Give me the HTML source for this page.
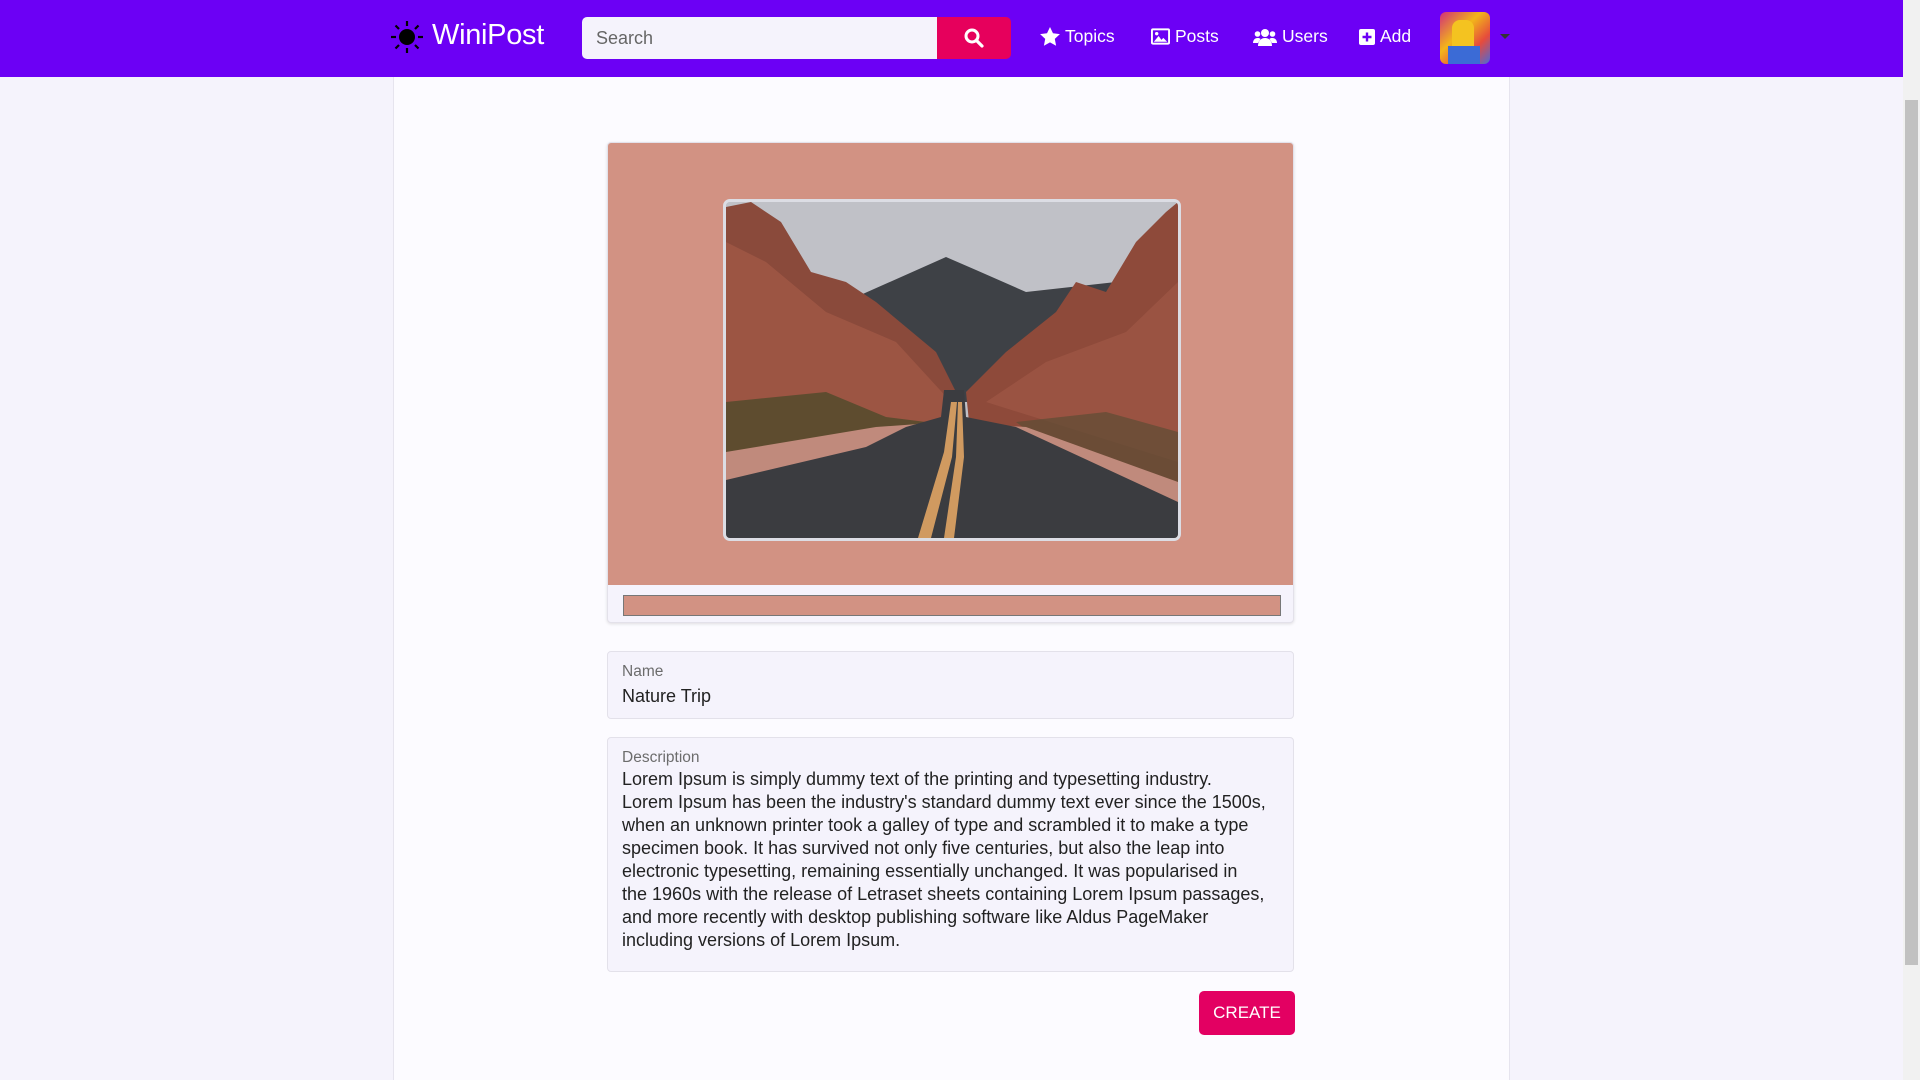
<!DOCTYPE html>
<html><head><meta charset="utf-8">
<style>
*{box-sizing:border-box;margin:0;padding:0}
body{width:1920px;height:1080px;overflow:hidden;background:#f5f3fc;font-family:"Liberation Sans",Arial,sans-serif;position:relative}
.nav{position:absolute;left:0;top:0;width:1903px;height:77px;background:#6c00f5}
.logo{position:absolute;left:432px;top:19px;color:#fff;font-size:29px;letter-spacing:-0.3px}
.search{position:absolute;left:582px;top:17px;width:355px;height:42px;background:#f5f3fc;border-radius:5px 0 0 5px;color:#666;font-size:18px;padding:11px 14px}
.sbtn{position:absolute;left:937px;top:17px;width:74px;height:42px;background:#e6005c;border-radius:0 5px 5px 0}
.link{position:absolute;top:26px;color:#fff;font-size:17.5px;display:flex;align-items:center;gap:5px}
.avatar{position:absolute;left:1440px;top:12px;width:50px;height:52px;border-radius:6px;background:linear-gradient(135deg,#d12f7a,#f2b51a 40%,#e64b3c 70%,#4a6ad8);overflow:hidden}
.caret{position:absolute;left:1500px;top:34px;width:0;height:0;border-left:5px solid transparent;border-right:5px solid transparent;border-top:5px solid #333}
.sb{position:absolute;left:1903px;top:0;width:17px;height:1080px;background:#f1f1f1}
.thumb{position:absolute;left:1905px;top:100px;width:13px;height:865px;background:#c1c1c1}
.cont{position:absolute;left:393px;top:77px;width:1117px;height:1003px;background:#fcfbff;border-left:1px solid #e6e4ee;border-right:1px solid #e6e4ee}
.card{position:absolute;left:607px;top:142px;width:687px;height:481px;background:#f5f3fc;border:1px solid #e3e1ea;border-radius:4px;box-shadow:0 1px 3px rgba(0,0,0,.12);overflow:hidden}
.pink{position:absolute;left:0;top:0;width:100%;height:442px;background:#d29283}
.img{position:absolute;left:115px;top:56px;width:458px;height:342px;border:3px solid #dcdde4;border-radius:7px;overflow:hidden;background:#bfc0c6}
.bar{position:absolute;left:15px;top:452px;width:658px;height:21px;background:#d29283;border:1px solid #777}
.field{position:absolute;left:607px;width:687px;background:#f5f3fc;border:1px solid #e3e1ea;border-radius:4px}
.lbl{position:absolute;left:14px;color:#6c6c6c;font-size:15.5px}
.val{position:absolute;left:14px;color:#222;font-size:18px;line-height:23px;white-space:nowrap}
.create{position:absolute;left:1199px;top:991px;width:96px;height:44px;background:#e30062;border-radius:5px;color:#fff;font-size:17px;text-align:center;line-height:44px}
</style></head><body>
<div class="nav">
<svg style="position:absolute;left:390px;top:20px" width="34" height="34" viewBox="0 0 34 34"><circle cx="17" cy="17" r="8" fill="#000"/><g stroke="#000" stroke-width="2.2"><line x1="17" y1="1" x2="17" y2="6"/><line x1="17" y1="28" x2="17" y2="33"/><line x1="1" y1="17" x2="6" y2="17"/><line x1="28" y1="17" x2="33" y2="17"/><line x1="5.5" y1="5.5" x2="9" y2="9"/><line x1="25" y1="25" x2="28.5" y2="28.5"/><line x1="28.5" y1="5.5" x2="25" y2="9"/><line x1="9" y1="25" x2="5.5" y2="28.5"/></g></svg>
<div class="logo">WiniPost</div>
<div class="search">Search</div>
<div class="sbtn"><svg style="position:absolute;left:27px;top:11px" width="20" height="20" viewBox="0 0 20 20"><circle cx="8" cy="8" r="6" fill="none" stroke="#fff" stroke-width="3"/><line x1="12.5" y1="12.5" x2="18" y2="18" stroke="#fff" stroke-width="3.2" stroke-linecap="round"/></svg></div>
<div class="link" style="left:1040px"><svg width="20" height="19" viewBox="0 0 24 23"><path d="M12 0l3.6 7.6 8.4 1-6.2 5.8 1.6 8.3L12 18.6 4.6 22.7l1.6-8.3L0 8.6l8.4-1z" fill="#fff"/></svg>Topics</div>
<div class="link" style="left:1151px"><svg width="19" height="17" viewBox="0 0 20 17"><rect x="0" y="0" width="20" height="17" rx="2" fill="#fff"/><rect x="2" y="2" width="16" height="13" fill="#6c00f5"/><path d="M3 14l5-6 3 4 2-2 4 4z" fill="#fff"/><circle cx="6" cy="5.5" r="1.8" fill="#fff"/></svg>Posts</div>
<div class="link" style="left:1253px"><svg width="24" height="18" viewBox="0 0 24 18"><circle cx="12" cy="5" r="4" fill="#fff"/><circle cx="4.5" cy="6" r="2.8" fill="#fff"/><circle cx="19.5" cy="6" r="2.8" fill="#fff"/><path d="M5 18c0-5 3-8 7-8s7 3 7 8z" fill="#fff"/><path d="M0 15c0-3 2-5 4.5-5s3 1 3 1L5 15z" fill="#fff"/><path d="M24 15c0-3-2-5-4.5-5s-3 1-3 1l2.5 4z" fill="#fff"/></svg>Users</div>
<div class="link" style="left:1359px"><svg width="16" height="16" viewBox="0 0 16 16"><rect width="16" height="16" rx="2" fill="#fff"/><path d="M8 3.5v9M3.5 8h9" stroke="#6c00f5" stroke-width="2.4"/></svg>Add</div>
<div class="avatar"><div style="position:absolute;left:12px;top:8px;width:22px;height:30px;background:#f4c320;border-radius:8px 8px 4px 4px"></div><div style="position:absolute;left:8px;top:34px;width:32px;height:18px;background:#3b6bd6"></div></div>
<div class="caret"></div>
</div>
<div class="cont"></div>
<div class="card"><div class="pink"></div>
<div class="img"><svg width="452" height="336" viewBox="0 0 452 336" preserveAspectRatio="none">
<rect width="452" height="336" fill="#c0c1c7"/>
<path d="M130 95 L220 55 L250 68 L300 90 L390 80 L390 200 L130 200z" fill="#3e4146"/>
<path d="M0 5 L25 0 L55 20 L85 70 L120 80 L150 100 L210 150 L230 190 L240 230 L0 260z" fill="#8a4a3b"/>
<path d="M0 40 L40 60 L100 110 L170 140 L225 200 L230 240 L0 250z" fill="#a45a47" opacity=".7"/>
<path d="M452 0 L440 10 L410 40 L380 90 L350 80 L330 110 L280 150 L240 190 L245 240 L452 300z" fill="#8e4a3a"/>
<path d="M452 80 L400 130 L320 160 L260 200 L452 260z" fill="#a25a47" opacity=".6"/>
<path d="M0 200 L100 190 L160 215 L200 220 L0 260z" fill="#4f4a2a" opacity=".8"/>
<path d="M290 220 L380 210 L452 230 L452 290 L330 250z" fill="#5d4d34" opacity=".7"/>
<path d="M0 250 L150 225 L220 220 L300 225 L452 280 L452 336 L0 336z" fill="#c08a7c"/>
<path d="M218 188 L238 188 L240 215 L290 225 L452 300 L452 336 L0 336 L0 278 L140 245 L180 225 L215 215z" fill="#3b3c40"/>
<path d="M225 200 L231 200 L226 255 L205 336 L192 336 L218 250z" fill="#d09a60"/>
<path d="M232 200 L236 200 L238 255 L228 336 L218 336 L230 255z" fill="#d09a60"/>
</svg></div>
<div class="bar"></div></div>
<div class="field" style="top:651px;height:68px"><div class="lbl" style="top:11px">Name</div><div class="val" style="top:33px">Nature Trip</div></div>
<div class="field" style="top:737px;height:235px"><div class="lbl" style="top:11px">Description</div><div class="val" style="top:30px">Lorem Ipsum is simply dummy text of the printing and typesetting industry.<br>Lorem Ipsum has been the industry's standard dummy text ever since the 1500s,<br>when an unknown printer took a galley of type and scrambled it to make a type<br>specimen book. It has survived not only five centuries, but also the leap into<br>electronic typesetting, remaining essentially unchanged. It was popularised in<br>the 1960s with the release of Letraset sheets containing Lorem Ipsum passages,<br>and more recently with desktop publishing software like Aldus PageMaker<br>including versions of Lorem Ipsum.</div></div>
<div class="create">CREATE</div>
<div class="sb"></div><div class="thumb"></div>
</body></html>
